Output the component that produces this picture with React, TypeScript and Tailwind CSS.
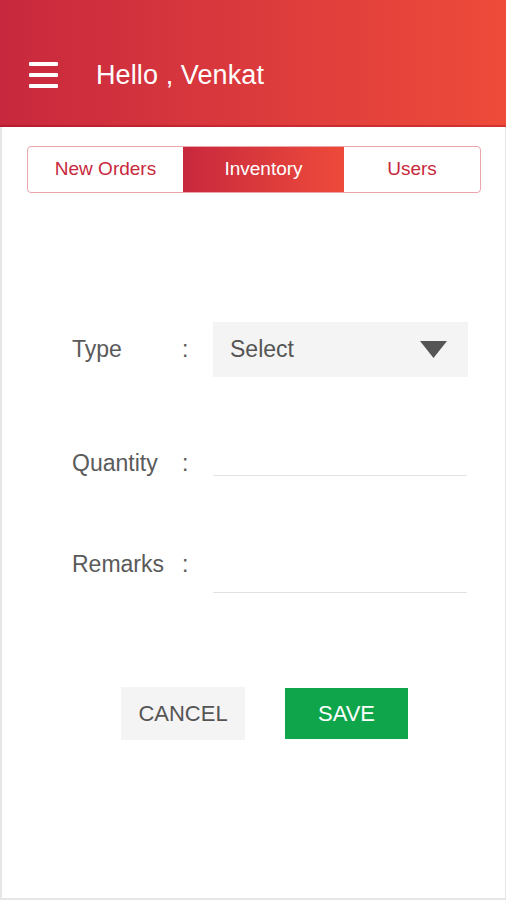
import React from "react";

export default function App() {
  return (
    <div className="w-[506px] h-[900px] bg-white flex flex-col" style={{ fontFamily: '"Liberation Sans", Arial, sans-serif' }}>
      <header className="h-[127px] shrink-0 flex items-center pt-[23px] pl-[29px] bg-gradient-to-r from-[#c8283d] to-[#ee4b3a] shadow-[inset_0_-2px_0_rgba(150,0,20,0.3)]">
        <div className="flex flex-col gap-[7.5px] w-[29px]">
          <span className="block h-[3.5px] rounded-[1px] bg-white" />
          <span className="block h-[3.5px] rounded-[1px] bg-white" />
          <span className="block h-[3.5px] rounded-[1px] bg-white" />
        </div>
        <h1 className="ml-[38px] text-[27px] leading-none text-white tracking-[0.1px]">Hello , Venkat</h1>
      </header>
      <main className="flex-1 flex flex-col border-l-2 border-r border-b-2 border-[#e6e6e6]">
        <div className="mt-[19px] ml-[25px] w-[454px] h-[47px] flex rounded-[4px] border border-[#eca5ab] overflow-hidden">
          <div className="w-[155px] flex items-center justify-center text-[19px] text-[#c8283c]">New Orders</div>
          <div className="w-[161px] flex items-center justify-center text-[19px] text-white bg-gradient-to-r from-[#c8283d] to-[#ee4a3a]">Inventory</div>
          <div className="flex-1 flex items-center justify-center text-[19px] text-[#c8283c]">Users</div>
        </div>

        <div className="mt-[129px] flex flex-col text-[23px] text-[#5a5a5a]">
          <div className="flex items-center h-[55px]">
            <div className="ml-[70px] w-[110px]">Type</div>
            <div className="w-[31px]">:</div>
            <div className="w-[255px] h-[55px] bg-[#f4f4f4] flex items-center justify-between pl-[17px] pr-[21px]">
              <span className="text-[#555]">Select</span>
              <svg width="27" height="17" viewBox="0 0 27 17"><polygon points="0,0 27,0 13.5,17" fill="#555" /></svg>
            </div>
          </div>
          <div className="flex items-center h-[25px] mt-[74px]">
            <div className="ml-[70px] w-[110px]">Quantity</div>
            <div className="w-[31px]">:</div>
            <div className="w-[254px] h-[25px] border-b border-[#e2e2e2]" />
          </div>
          <div className="flex items-center h-[57px] mt-[60px]">
            <div className="ml-[70px] w-[110px]">Remarks</div>
            <div className="w-[31px]">:</div>
            <div className="w-[254px] h-[57px] border-b border-[#e2e2e2]" />
          </div>
        </div>

        <div className="mt-[94px] flex items-center">
          <button className="ml-[119px] w-[124px] h-[53px] bg-[#f4f4f4] text-[22px] text-[#555]">CANCEL</button>
          <button className="ml-[40px] w-[123px] h-[51px] bg-[#0fa54b] text-[22px] text-white">SAVE</button>
        </div>
      </main>
    </div>
  );
}
